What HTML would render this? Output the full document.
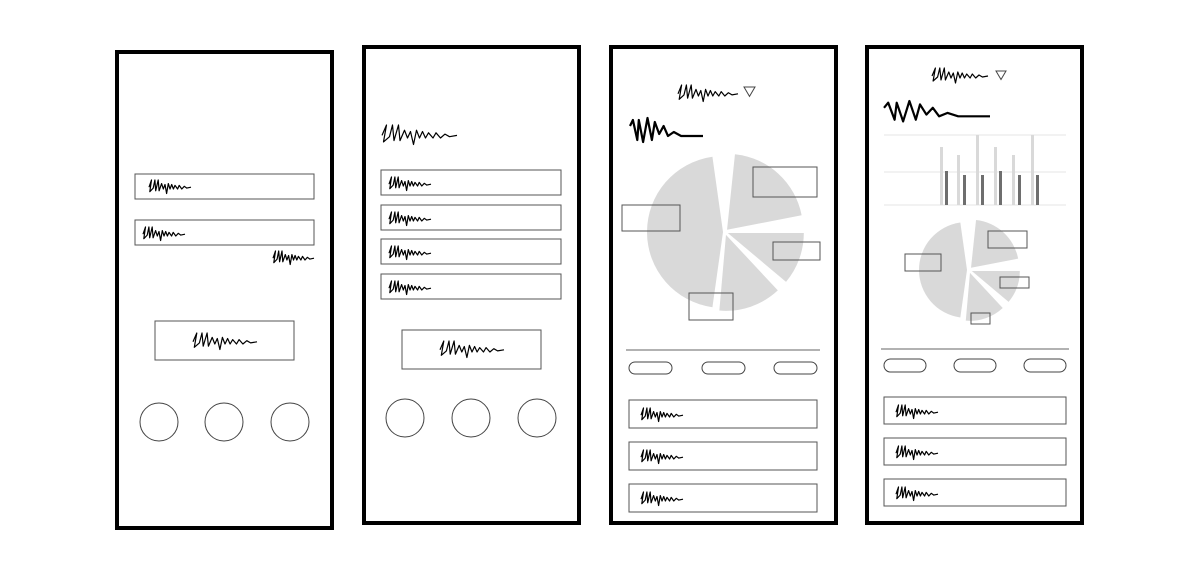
<!DOCTYPE html>
<html><head><meta charset="utf-8"><style>
html,body{margin:0;padding:0;background:#fff;width:1200px;height:576px;overflow:hidden}
svg{display:block}
</style></head><body>
<svg id="s" width="1200" height="576" xmlns="http://www.w3.org/2000/svg">
<g fill="none" stroke="#000" stroke-width="4">
<rect x="117" y="52" width="215" height="476"/>
<rect x="364" y="47" width="215" height="476"/>
<rect x="611" y="47" width="225" height="476"/>
<rect x="867" y="47" width="215" height="476"/>
</g>
<g id="g" fill="none" stroke="#555" stroke-width="1"></g>
</svg>
<script>
var g=document.getElementById('g'),NS='http://www.w3.org/2000/svg';
function el(t,a,p){var e=document.createElementNS(NS,t);for(var k in a)e.setAttribute(k,a[k]);(p||g).appendChild(e);return e;}
function R(x1,y1,x2,y2,c){el('rect',{x:x1,y:y1,width:x2-x1,height:y2-y1,stroke:c||'#555'});}
function C(x,y,r){el('circle',{cx:x,cy:y,r:r,stroke:'#444'});}
function L(x1,y1,x2,y2,c){el('line',{x1:x1,y1:y1,x2:x2,y2:y2,stroke:c||'#777'});}
function P(x1,y1,x2,y2){var r=(y2-y1)/2;el('rect',{x:x1,y:y1,width:x2-x1,height:y2-y1,rx:r,stroke:'#444'});}
var base=[[0,-0.2],[0.06,-1],[0.02,0.3],[0.1,-0.1],[0.14,-1],[0.16,0.2],[0.22,-1],[0.24,0.2],[0.3,-0.6],[0.34,0],[0.38,-0.5],[0.42,0.5],[0.46,-0.6],[0.5,0],[0.54,-0.5],[0.58,0],[0.62,-0.4],[0.68,0],[0.72,-0.4],[0.78,0],[0.84,-0.3],[0.9,-0.1],[1,-0.2]];
function S(x,y,w,h,sw){var d='';base.forEach(function(p,i){d+=(i?'L':'M')+(x+p[0]*w).toFixed(1)+' '+(y+p[1]*h).toFixed(1);});el('path',{d:d,stroke:'#000','stroke-width':sw||1.2,'stroke-linejoin':'round'});}
var big=[[0,-0.6],[0.04,-0.9],[0.1,0.1],[0.12,-0.9],[0.18,0.2],[0.24,-1],[0.3,0.1],[0.34,-0.8],[0.4,-0.2],[0.46,-0.6],[0.52,-0.1],[0.6,-0.3],[0.7,-0.1],[1,-0.1]];
function B(x,y,w,h){var d='';big.forEach(function(p,i){d+=(i?'L':'M')+(x+p[0]*w).toFixed(1)+' '+(y+p[1]*h).toFixed(1);});el('path',{d:d,stroke:'#000','stroke-width':2.2,'stroke-linejoin':'round'});}
function T(x,y,w){el('path',{d:'M'+x+' '+y+'L'+(x+w)+' '+y+'L'+(x+w/2)+' '+(y+w*0.85)+'Z',stroke:'#444'});}
function pie(cx,cy,r,sl){sl.forEach(function(s){var a0=s[0]*Math.PI/180,a1=s[1]*Math.PI/180,m=(a0+a1)/2,o=s[2]||3;var x=cx+o*Math.cos(m),y=cy+o*Math.sin(m);var big=(s[1]-s[0])>180?1:0;
el('path',{d:'M'+x+' '+y+'L'+(x+r*Math.cos(a0))+' '+(y+r*Math.sin(a0))+'A'+r+' '+r+' 0 '+big+' 1 '+(x+r*Math.cos(a1))+' '+(y+r*Math.sin(a1))+'Z',fill:'#d9d9d9',stroke:'none'});});}
// frame1
R(135,174,314,199);S(149,189,42,9);R(135,220,314,245);S(143,236,42,9);S(273,260,41,9);
R(155,321,294,360);S(193,344,64,11);C(159,422,19);C(224,422,19);C(290,422,19);
// frame2
S(382,138,75,13);
[170,205,239,274].forEach(function(y){R(381,y,561,y+25);S(389,y+16,42,9);});
R(402,330,541,369);S(440,352,64,11);C(405,418,19);C(471,418,19);C(537,418,19);
// frame3
pie(725,232,76,[[98,262,2],[-84,-11,3],[0,40,3],[47,95,3]]);
S(678,96,60,11);T(744,87,11);B(630,138,73,20);
R(753,167,817,197);R(622,205,680,231);R(773,242,820,260);R(689,293,733,320);
L(626,350,820,350,'#666');P(629,362,672,374);P(702,362,745,374);P(774,362,817,374);
[400,442,484].forEach(function(y){R(629,y,817,y+28);S(641,y+17,42,9);});
// frame4
S(932,78,56,10);T(996,71,10);B(884,118,106,17);
L(884,135,1066,135,'#e6e6e6');L(884,172,1066,172,'#e6e6e6');L(884,205,1066,205,'#e6e6e6');
[[940,147],[957,155],[976,135],[994,147],[1012,155],[1031,135]].forEach(function(b){el('rect',{x:b[0],y:b[1],width:3,height:205-b[1],fill:'#d9d9d9',stroke:'none'});});
[[945,171],[963,175],[981,175],[999,171],[1018,175],[1036,175]].forEach(function(b){el('rect',{x:b[0],y:b[1],width:3,height:205-b[1],fill:'#6e6e6e',stroke:'none'});});
pie(969,270,48,[[98,262,2],[-84,-11,3],[0,40,3],[47,95,3]]);
R(988,231,1027,248);R(905,254,941,271);R(1000,277,1029,288);R(971,313,990,324);
L(881,349,1069,349,'#666');P(884,359,926,372);P(954,359,996,372);P(1024,359,1066,372);
[397,438,479].forEach(function(y){R(884,y,1066,y+27);S(896,y+17,42,9);});
</script>
</body></html>
